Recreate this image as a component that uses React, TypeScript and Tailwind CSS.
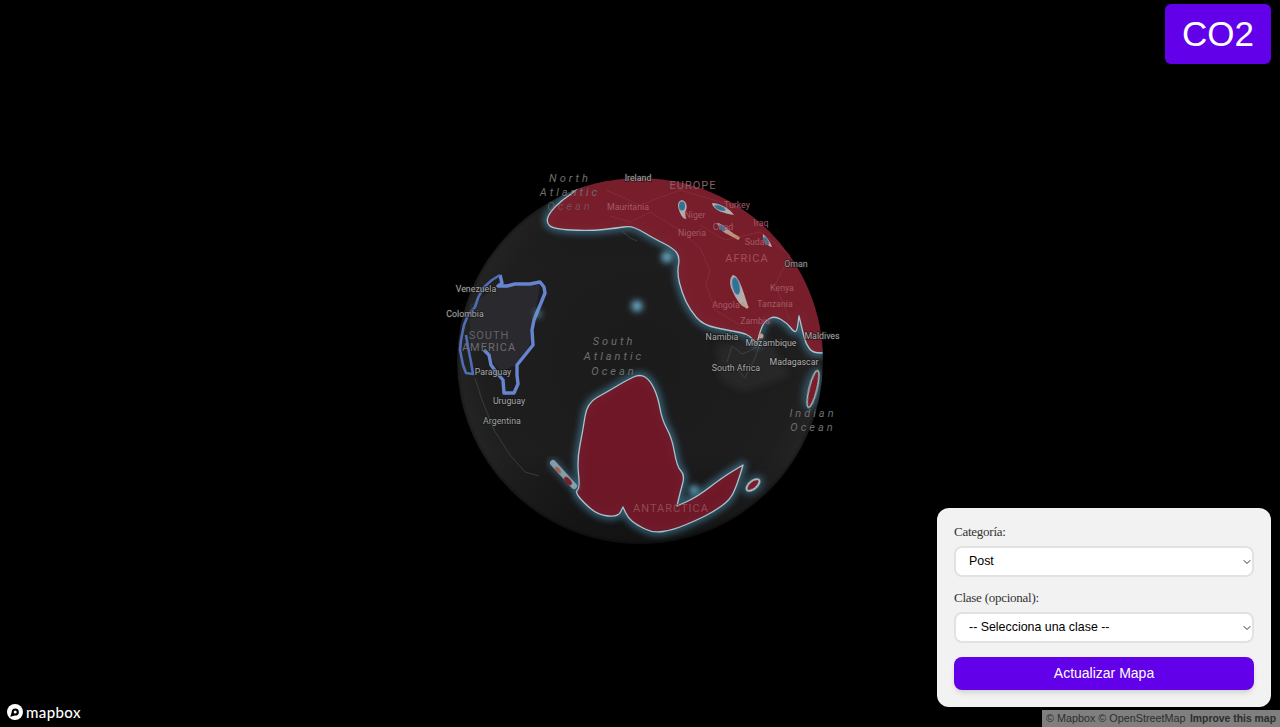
import { ChevronDown } from "lucide-react";

// rounds a point list off into one closed path
function smooth(pts: number[][]) {
  const mid = (a: number[], b: number[]) => `${(a[0] + b[0]) / 2} ${(a[1] + b[1]) / 2}`;
  let d = `M${mid(pts[pts.length - 1], pts[0])}`;
  pts.forEach((p, i) => {
    d += ` Q${p[0]} ${p[1]} ${mid(p, pts[(i + 1) % pts.length])}`;
  });
  return d + " Z";
}

const line = (pts: number[][]) => "M" + pts.map((p) => p.join(" ")).join(" L");

const africa = smooth([
  [546, 222], [550, 212], [562, 200], [580, 188], [600, 150], [850, 150], [850, 354], [820, 353], [812, 352],
  [806, 344], [803, 333], [799, 316], [799, 316], [797, 331], [794, 332], [787, 323], [775, 316], [766, 320],
  [761, 328], [757, 344], [757, 344], [750, 336], [743, 333], [727, 330], [703, 325], [690, 310], [682, 293],
  [677, 273], [680, 257], [673, 248], [653, 238], [640, 230], [630, 226], [617, 228], [590, 231], [553, 229],
]);

const antarctica = smooth([
  [640, 374], [650, 380], [658, 397], [662, 420], [672, 438], [677, 467], [685, 475], [680, 493], [677, 506],
  [677, 506], [697, 497], [723, 477], [743, 465], [743, 465], [737, 485], [730, 500], [713, 512], [697, 520],
  [673, 530], [653, 533], [637, 525], [628, 518], [623, 507], [623, 507], [618, 517], [598, 515], [583, 502],
  [575, 492], [580, 488], [577, 460], [583, 430], [587, 403], [607, 392], [627, 380],
]);

const saEast = line([
  [500, 275], [502, 283], [498, 286], [507, 286], [515, 284], [530, 284], [540, 282], [544, 287], [545, 293],
  [541, 303], [538, 310], [534, 320], [532, 330], [533, 345], [525, 355], [517, 365], [517, 375], [518, 384],
  [514, 393], [504, 393], [503, 380], [497, 373], [491, 365], [489, 355], [484, 350],
]);
const saWest = line([
  [500, 275], [492, 280], [483, 288], [478, 298], [475, 307], [468, 315], [464, 325], [461, 340], [460, 350],
  [463, 365], [466, 373], [473, 374], [471, 362], [468, 347], [466, 335],
]);

// outer pale teardrops and their blue cores
const holes = [
  { d: "M682 200 C687 201 688 208 685 212 C685 216 687 219 686 219 C683 219 680 214 679 210 C677 205 678 201 682 200 Z", cx: 682, cy: 206, rx: 3, ry: 4.5, r: 0 },
  { d: "M712 203 C720 203 730 209 734 215 C727 214 713 211 712 203 Z", cx: 720, cy: 208, rx: 6, ry: 2.2, r: 22 },
  { d: "M717 223 C722 223 728 230 733 233 C727 236 721 232 717 223 Z", cx: 722, cy: 228, rx: 4, ry: 2.2, r: 40 },
  { d: "M763 234 C767 237 771 243 772 247 C767 246 762 241 763 234 Z", cx: 766, cy: 241, rx: 2, ry: 4.5, r: -30 },
  { d: "M733 275 C739 276 743 290 748 306 C744 311 736 300 732 290 C729 284 730 277 733 275 Z", cx: 736, cy: 286, rx: 3.6, ry: 9, r: -12 },
];

const pink = "#a35a68";
const labels = [
  { t: "Ireland", x: 638, y: 181, f: "#a8a8a8" },
  { t: "Mauritania", x: 628, y: 210, f: pink },
  { t: "Niger", x: 695, y: 218, f: pink },
  { t: "Turkey", x: 737, y: 208, f: pink },
  { t: "Iraq", x: 761, y: 226, f: pink },
  { t: "Chad", x: 723, y: 230, f: pink },
  { t: "Nigeria", x: 692, y: 236, f: pink },
  { t: "Sudan", x: 757, y: 245, f: pink },
  { t: "Oman", x: 796, y: 267, f: "#9a9a9a" },
  { t: "Kenya", x: 782, y: 291, f: pink },
  { t: "Angola", x: 726, y: 308, f: pink },
  { t: "Tanzania", x: 775, y: 307, f: pink },
  { t: "Zambia", x: 755, y: 324, f: pink },
  { t: "Namibia", x: 722, y: 340, f: "#a8a8a8" },
  { t: "Mozambique", x: 771, y: 346, f: "#b0b0b0" },
  { t: "Maldives", x: 822, y: 339, f: "#a8a8a8" },
  { t: "South Africa", x: 736, y: 371, f: "#a8a8a8" },
  { t: "Madagascar", x: 794, y: 365, f: "#b0b0b0" },
  { t: "Venezuela", x: 476, y: 292, f: "#a8a8a8" },
  { t: "Colombia", x: 465, y: 317, f: "#a8a8a8" },
  { t: "Paraguay", x: 493, y: 375, f: "#a8a8a8" },
  { t: "Uruguay", x: 509, y: 404, f: "#a8a8a8" },
  { t: "Argentina", x: 502, y: 424, f: "#a0a0a0" },
];

const regions = [
  { t: "EUROPE", x: 693, y: 189, f: "#8a5f68" },
  { t: "AFRICA", x: 747, y: 262, f: "#a0505f" },
  { t: "SOUTH", x: 489, y: 339, f: "#646464" },
  { t: "AMERICA", x: 489, y: 351, f: "#6c6c6c" },
  { t: "ANTARCTICA", x: 671, y: 512, f: "#8f4a55" },
];

const oceans = [
  { t: "North", x: 570, y: 182 },
  { t: "Atlantic", x: 570, y: 196 },
  { t: "Ocean", x: 570, y: 210 },
  { t: "South", x: 614, y: 345 },
  { t: "Atlantic", x: 614, y: 360 },
  { t: "Ocean", x: 614, y: 375 },
  { t: "Indian", x: 813, y: 417 },
  { t: "Ocean", x: 813, y: 431 },
];

function HeatShape({ d, fill }: { d: string; fill: string }) {
  return (
    <g>
      <path d={d} fill="none" stroke="#4f9cc0" strokeWidth="8" opacity="0.5" filter="url(#glow)" />
      <path d={d} fill={fill} fillOpacity="0.93" stroke="#a8c4cc" strokeWidth="1.3" filter="url(#soft)" />
    </g>
  );
}

function Globe() {
  return (
    <svg className="absolute left-[430px] top-[160px] h-[400px] w-[420px]" viewBox="430 160 420 400" fontFamily="Roboto, sans-serif">
      <defs>
        <radialGradient id="sphere" cx="50%" cy="50%" r="50%">
          <stop offset="0%" stopColor="#1b1b1c" />
          <stop offset="85%" stopColor="#1e1e1f" />
          <stop offset="98%" stopColor="#232323" />
          <stop offset="100%" stopColor="#181818" />
        </radialGradient>
        <linearGradient id="shade" x1="0" y1="0" x2="0" y2="1">
          <stop offset="0%" stopColor="#000" stopOpacity="0.15" />
          <stop offset="25%" stopColor="#000" stopOpacity="0" />
          <stop offset="75%" stopColor="#000" stopOpacity="0" />
          <stop offset="100%" stopColor="#000" stopOpacity="0.5" />
        </linearGradient>
        <clipPath id="disc">
          <circle cx="640" cy="361" r="183" />
        </clipPath>
        <filter id="glow" x="-30%" y="-30%" width="160%" height="160%">
          <feGaussianBlur stdDeviation="3" />
        </filter>
        <filter id="soft" x="-30%" y="-30%" width="160%" height="160%">
          <feGaussianBlur stdDeviation="0.7" />
        </filter>
      </defs>

      <circle cx="640" cy="361" r="183" fill="url(#sphere)" />
      <circle cx="640" cy="361" r="183" fill="url(#shade)" />

      {/* faint land and coast lines under the heat layer */}
      <path d="M716 345 L770 340 L790 375 L745 392 L720 380 Z" fill="#2e2e2f" opacity="0.6" filter="url(#glow)" />
      <g fill="none" stroke="#484848" strokeWidth="0.7">
        <path d="M475 378 L482 400 L494 430 L510 455 L525 472 L539 476" />
        <path d="M727 362 L732 346 L742 354 L752 350 L760 344 L755 358 L745 378 L738 370" />
        <path d="M622 231 L630 238 L637 241" />
      </g>

      {/* blue outline */}
      <g fill="none" strokeLinejoin="round" clipPath="url(#disc)">
        <path d="M470 305 L498 287 L540 285 L530 345 L516 365 L500 372 L485 350 L470 345 Z" fill="#29292e" stroke="none" />
        <path d={saEast} stroke="#6684d0" strokeWidth="3.4" filter="url(#soft)" />
        <path d={saWest} stroke="#4f6cb4" strokeWidth="2.6" filter="url(#soft)" />
      </g>

      {/* blue spots */}
      <g fill="#6ab0cc" filter="url(#glow)">
        <circle cx="637" cy="306" r="5.5" />
        <circle cx="667" cy="257" r="5.5" />
        <circle cx="538" cy="314" r="3" />
        <circle cx="694" cy="490" r="4.5" />
      </g>

      {/* heat layer */}
      <g clipPath="url(#disc)" strokeLinejoin="round">
        <HeatShape d={africa} fill="#7f1c2d" />
        <HeatShape d={antarctica} fill="#741a26" />
        <g transform="rotate(14 813 389)">
          <ellipse cx="813" cy="389" rx="10" ry="22" fill="#4f9cc0" opacity="0.35" filter="url(#glow)" />
          <ellipse cx="813" cy="389" rx="4" ry="19" fill="#7b1c2c" stroke="#a8c4cc" strokeWidth="1.3" filter="url(#soft)" />
        </g>
        <g transform="rotate(-40 753 485)">
          <ellipse cx="753" cy="485" rx="13" ry="9" fill="#4f9cc0" opacity="0.35" filter="url(#glow)" />
          <ellipse cx="753" cy="485" rx="8" ry="4" fill="#7b1c2c" stroke="#b5cfd6" strokeWidth="1.6" filter="url(#soft)" />
        </g>
        <path d="M553 463 L574 486" stroke="#4f9cc0" strokeWidth="10" opacity="0.4" strokeLinecap="round" filter="url(#glow)" />
        <path d="M553 463 L574 486" stroke="#a8c4cc" strokeWidth="6" opacity="0.7" strokeLinecap="round" filter="url(#soft)" />
        <ellipse cx="558" cy="470" rx="1.8" ry="4" fill="#a65a4a" transform="rotate(-42 558 470)" filter="url(#soft)" />
        <ellipse cx="568" cy="481" rx="2.5" ry="5" fill="#7b1c2c" transform="rotate(-42 568 481)" filter="url(#soft)" />

        {holes.map((h) => (
          <g key={h.cx}>
            <path d={h.d} fill="#bfc4c4" opacity="0.85" filter="url(#soft)" />
            <ellipse cx={h.cx} cy={h.cy} rx={h.rx} ry={h.ry} fill="#2f7396" transform={`rotate(${h.r} ${h.cx} ${h.cy})`} filter="url(#soft)" />
          </g>
        ))}
        <path d="M727 232 L738 238" stroke="#c09478" strokeWidth="3.5" strokeLinecap="round" filter="url(#soft)" />
        <path d="M742 303 L747 307" stroke="#c09f86" strokeWidth="3" strokeLinecap="round" filter="url(#soft)" />
        <circle cx="761" cy="336" r="2.5" fill="#c49a80" filter="url(#soft)" />
      </g>

      {/* country lines over africa */}
      <g fill="none" stroke="#9a4050" strokeWidth="0.6" opacity="0.6">
        <path d="M610 216 L630 222 L650 212 L680 230 L700 248 L710 270 L706 285 L715 310 L740 325" />
        <path d="M700 225 L725 240 L760 232 L790 255 L775 285 L790 320" />
        <path d="M606 190 L640 205 L680 190 L730 205" />
      </g>

      <g textAnchor="middle" fill="#6e6e6e" fontStyle="italic" fontSize="11" letterSpacing="3">
        {oceans.map((o) => (
          <text key={o.t + o.y} x={o.x} y={o.y} opacity={o.y === 210 ? 0.6 : 1}>{o.t}</text>
        ))}
      </g>
      <g textAnchor="middle" fontSize="11" letterSpacing="1">
        {regions.map((r) => (
          <text key={r.t} x={r.x} y={r.y} fill={r.f}>{r.t}</text>
        ))}
      </g>
      <g textAnchor="middle" fontSize="8.8">
        {labels.map((l) => (
          <text
            key={l.t}
            x={l.x}
            y={l.y}
            fill={l.f}
            stroke={l.f === pink ? "none" : "#151515"}
            strokeWidth="1.6"
            strokeOpacity="0.7"
            paintOrder="stroke"
          >
            {l.t}
          </text>
        ))}
      </g>
    </svg>
  );
}

function Field({ label, value }: { label: string; value: string }) {
  return (
    <div className="flex flex-col">
      <label className="mb-[5px] text-[13px] leading-[18px] tracking-[-0.25px] text-[#333]">{label}</label>
      <div className="relative">
        <select
          defaultValue={value}
          className="h-[31px] w-full appearance-none rounded-lg border-2 border-[#e2e2e2] bg-white pl-[13px] font-['Liberation_Sans',sans-serif] text-[12.4px] text-black"
        >
          <option>{value}</option>
        </select>
        <ChevronDown className="absolute right-[1px] top-[10px] h-3 w-3 text-[#333]" />
      </div>
    </div>
  );
}

export default function App() {
  return (
    <div className="relative h-screen w-full overflow-hidden bg-black font-['Liberation_Serif',serif]">
      <Globe />

      <button className="absolute right-[9px] top-1 flex h-[60px] w-[106px] items-center justify-center rounded-md bg-[#6200ea] font-['Liberation_Sans',sans-serif] text-[35px] text-white">
        CO2
      </button>

      <div className="absolute bottom-5 right-[9px] flex h-[199px] w-[334px] flex-col gap-3 rounded-xl bg-[#f2f2f2] px-[17px] pt-[15px]">
        <Field label="Categoría:" value="Post" />
        <Field label="Clase (opcional):" value="-- Selecciona una clase --" />
        <button className="mt-[2px] h-[33px] rounded-lg bg-[#6200ea] pb-px font-['Liberation_Sans',sans-serif] text-sm text-white shadow-md">
          Actualizar Mapa
        </button>
      </div>

      <div className="absolute bottom-[7px] left-[7px] flex items-center gap-[3px] text-white">
        <svg className="h-4 w-4" viewBox="0 0 17 17">
          <circle cx="8.5" cy="8.5" r="8.5" fill="#fff" />
          <path d="M3.5 13.5 L5 8.5 A3.8 3.8 0 1 1 8.5 12.3 Z" fill="#000" />
          <circle cx="8.7" cy="8.5" r="1.6" fill="#fff" />
        </svg>
        <span className="font-['Lato',sans-serif] text-[15px] font-medium leading-none tracking-[0.4px]">mapbox</span>
      </div>

      <div className="absolute bottom-0 right-0 flex h-[17px] w-[238px] items-center justify-between whitespace-nowrap bg-[#7f7f7f] px-1 font-['Liberation_Sans',sans-serif] text-[10.8px] text-[#2d2d2d]">
        <span>© Mapbox © OpenStreetMap</span>
        <span className="text-[10.4px] font-bold">Improve this map</span>
      </div>
    </div>
  );
}
